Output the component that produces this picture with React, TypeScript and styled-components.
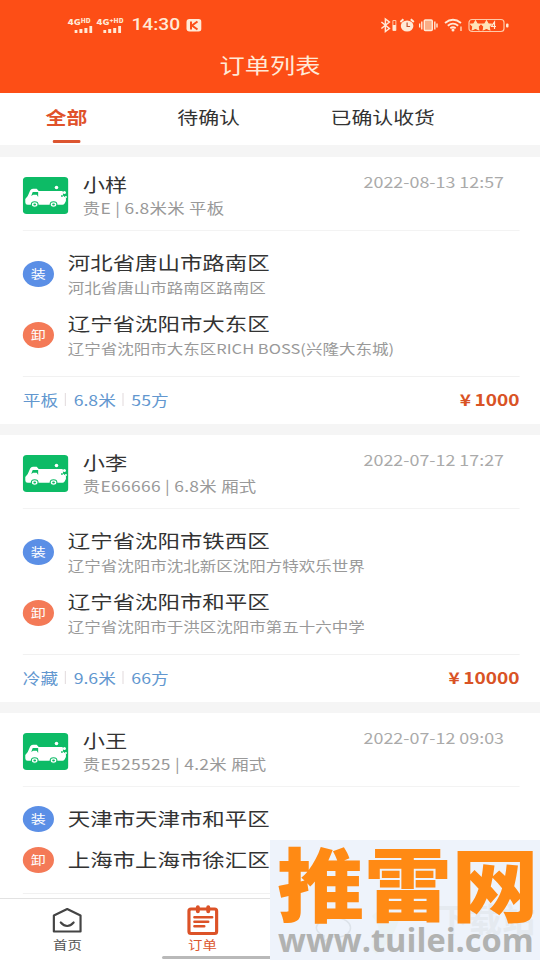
import React from 'react';
import styled, { createGlobalStyle } from 'styled-components';

const GlobalStyle = createGlobalStyle`
  * { box-sizing: border-box; }
  body { margin: 0; background: #fff; overflow: hidden; }
`;

const Page = styled.div`
  position: relative;
  width: 540px;
  height: 960px;
  overflow: hidden;
  font-family: 'Noto Sans CJK SC', sans-serif;
`;

/* The phone screen is 450 units wide and is stretched to fill the page. */
const Screen = styled.div`
  width: 450px;
  height: 960px;
  display: flex;
  flex-direction: column;
  background: #f5f5f5;
  color: #333;
  transform: scaleX(1.2);
  transform-origin: 0 0;
`;

const Header = styled.header`
  flex: none;
  height: 93px;
  background: #fd4e16;
  color: #ffe9d6;
`;

const StatusBar = styled.div`
  display: flex;
  align-items: center;
  height: 49px;
  padding: 0 25px 0 56.5px;
`;

const Network = styled.div`
  width: 24px;
  display: flex;
  flex-direction: column;
  align-items: flex-start;
  font: 900 8px/8px 'Noto Sans CJK SC', sans-serif;
  white-space: nowrap;
`;

const Sup = styled.span`
  font-size: 5.5px;
  vertical-align: 2px;
`;

const Bars = styled.svg`
  width: 15px;
  height: 7px;
  margin-left: 5px;
`;

const Clock = styled.span`
  margin-left: 5px;
  width: 45px;
  font: 500 16px/24px Roboto, sans-serif;
`;

const StatusIcon = styled.svg<{ $w: number; $ml?: number }>`
  flex: none;
  width: ${(p) => p.$w / 1.2}px;
  height: 16px;
  margin-left: ${(p) => (p.$ml ?? 0) / 1.2}px;
`;

const StatusRight = styled.div`
  margin-left: auto;
  display: flex;
  align-items: center;
`;

const Title = styled.h1`
  margin: 0;
  text-align: center;
  font-size: 21px;
  line-height: 30px;
  font-weight: 400;
`;

const Tabs = styled.nav`
  flex: none;
  display: flex;
  height: 52px;
  padding-left: 38px;
  background: #fff;
`;

const Tab = styled.div<{ $active?: boolean; $gap?: number }>`
  display: flex;
  flex-direction: column;
  align-items: center;
  margin-right: ${(p) => p.$gap ?? 0}px;
  padding-top: 12px;
  font-size: 17.4px;
  line-height: 24px;
  font-weight: ${(p) => (p.$active ? 700 : 400)};
  color: ${(p) => (p.$active ? '#e0522b' : '#333')};
  &::after {
    content: '';
    width: 23px;
    height: 3px;
    margin-top: 11px;
    border-radius: 1px;
    background: ${(p) => (p.$active ? '#dc5530' : 'transparent')};
  }
`;

const List = styled.main`
  flex: 1;
  min-height: 0;
  overflow: hidden;
  display: flex;
  flex-direction: column;
  gap: 11px;
  padding-top: 12px;
`;

const Card = styled.article`
  flex: none;
  padding: 0 17px 0 19px;
  background: #fff;
`;

const CardHead = styled.div`
  display: flex;
  height: 74px;
  padding-top: 15px;
  border-bottom: 1px solid #f3f3f3;
`;

const Truck = styled.svg`
  flex: none;
  width: 38px;
  height: 37px;
  margin: 5px 0.5px 0 -0.5px;
`;

const Driver = styled.div`
  flex: 1;
  margin-left: 12px;
  white-space: nowrap;
`;

const Name = styled.div`
  font-size: 18.5px;
  line-height: 24px;
`;

const Vehicle = styled.div`
  font-size: 14.5px;
  letter-spacing: 0.25px;
  line-height: 24px;
  color: #999;
`;

const DateText = styled.time`
  margin-right: 13px;
  font-size: 14.9px;
  line-height: 20px;
  color: #aaa;
`;

const Stops = styled.div<{ $brief: boolean }>`
  display: flex;
  flex-direction: column;
  gap: ${(p) => (p.$brief ? 13 : 11)}px;
  padding: 18px 0 ${(p) => (p.$brief ? 19 : 16)}px;
  border-bottom: 1px solid #f1f1f1;
`;

const Stop = styled.div`
  display: flex;
  align-items: center;
`;

const Badge = styled.span<{ $color: string }>`
  flex: none;
  width: 26px;
  height: 26px;
  margin: 0 11.7px 1px -0.2px;
  border-radius: 50%;
  background: ${(p) => p.$color};
  color: #fff;
  text-align: center;
  font-size: 12.5px;
  line-height: 26px;
`;

const StopText = styled.div`
  margin: -1px 0 1px;
  white-space: nowrap;
`;

const Place = styled.div`
  font-size: 18.7px;
  line-height: 28px;
`;

const Address = styled.div`
  font-size: 13.75px;
  line-height: 22px;
  color: #999;
`;

const CardFoot = styled.div`
  display: flex;
  align-items: center;
  justify-content: space-between;
  height: 47px;
  padding-bottom: 2px;
`;

const Tags = styled.div`
  display: flex;
  align-items: center;
`;

const Tag = styled.span`
  font-size: 14.7px;
  line-height: 20px;
  color: #6297cf;
  & + &::before {
    content: '';
    display: inline-block;
    width: 1px;
    height: 13px;
    margin: 0 6.5px 0 5.5px;
    background: #e6e0e2;
  }
`;

const Price = styled.strong`
  display: flex;
  align-items: center;
  gap: 3px;
  font-size: 15.9px;
  line-height: 20px;
  font-weight: 700;
  color: #d95325;
`;

const TabBar = styled.footer`
  flex: none;
  display: grid;
  grid-template-columns: repeat(4, 1fr);
  height: 62px;
  border-top: 1px solid #e2e2e2;
  background: #fff;
`;

const TabItem = styled.div<{ $active?: boolean }>`
  display: flex;
  flex-direction: column;
  align-items: center;
  padding-top: 6px;
  font-size: 12px;
  line-height: 16px;
  color: ${(p) => (p.$active ? '#dc5730' : '#555')};
`;

const TabIcon = styled.svg`
  width: 28px;
  height: 32px;
`;

const HomeIndicator = styled.div`
  position: absolute;
  left: 162px;
  top: 956px;
  width: 216px;
  height: 3px;
  border-radius: 2px;
  background: #b9b9b9;
`;

const Watermark = styled.div`
  position: absolute;
  left: 270px;
  top: 840px;
  width: 270px;
  height: 120px;
  background: #eef3fb;
`;

const WatermarkTitle = styled.div`
  position: relative;
  width: 240px;
  margin-left: 7px;
  height: 84px;
  font-size: 80px;
  line-height: 81px;
  font-weight: 900;
  color: #ff8a14;
  white-space: nowrap;
  transform: scaleX(1.09);
  transform-origin: 0 0;
`;

const WatermarkUrl = styled.div`
  position: relative;
  margin-left: 8px;
  font: 700 32.6px/31px 'Open Sans', sans-serif;
  color: #b1b2b1;
  white-space: nowrap;
`;

const Ghost = styled.div`
  position: absolute;
  left: 166px;
  top: 56px;
  font-size: 33px;
  line-height: 44px;
  font-weight: 700;
  color: #e5eaf0;
  white-space: nowrap;
`;

const GhostArt = styled.svg`
  position: absolute;
  left: 30px;
  top: 60px;
  width: 110px;
  height: 60px;
`;

const TruckIcon = () => (
  <Truck viewBox="0 0 46 37" preserveAspectRatio="none">
    <rect width="46" height="37" rx="4" fill="#0dbb66" />
    <path
      d="M2.5 25.5v-3.5l2.500-3 2.4-5.500q.8-1.700 2.800-1.700h3.800l2 2.200h23.500q1 0 1 1v3.500l3 2.500v3l-1.500 2.800q-.7 1-2 1H5q-2.500 0-2.500-2.500z"
      fill="#fff"
    />
    <path d="M8.500 19l1.500-4h5.500V20l-1.500-2.300h-3.500z" fill="#0dbb66" />
    <g fill="#fff">
      <circle cx="34" cy="10.500" r="1.800" />
      <circle cx="42" cy="15.500" r="1.500" />
      <circle cx="43.500" cy="20" r="1" />
      <ellipse cx="12" cy="27.500" rx="3.400" ry="2.800" stroke="#0dbb66" strokeWidth="1.100" />
      <ellipse cx="31" cy="27.500" rx="3.400" ry="2.800" stroke="#0dbb66" strokeWidth="1.100" />
    </g>
    <g fill="#0dbb66">
      <ellipse cx="12" cy="27.500" rx="1.400" ry="1" />
      <ellipse cx="31" cy="27.500" rx="1.400" ry="1" />
      <circle cx="39.500" cy="19" r=".9" />
    </g>
  </Truck>
);

const SignalBars = () => (
  <Bars viewBox="0 0 18 7" preserveAspectRatio="none" fill="currentColor">
    <rect x="0" y="4" width="3" height="3" />
    <rect x="5" y="3" width="3" height="4" />
    <rect x="10" y="2" width="3" height="5" />
    <rect x="15" y="0" width="3" height="7" />
  </Bars>
);

interface StopData {
  place: string;
  address?: string;
}

interface Order {
  name: string;
  vehicle: string;
  date: string;
  stops: [StopData, StopData];
  tags: string[];
  price?: string;
}

const orders: Order[] = [
  {
    name: '小样',
    vehicle: '贵E | 6.8米米 平板',
    date: '2022-08-13 12:57',
    stops: [
      { place: '河北省唐山市路南区', address: '河北省唐山市路南区路南区' },
      { place: '辽宁省沈阳市大东区', address: '辽宁省沈阳市大东区RICH BOSS(兴隆大东城)' },
    ],
    tags: ['平板', '6.8米', '55方'],
    price: '1000',
  },
  {
    name: '小李',
    vehicle: '贵E66666 | 6.8米 厢式',
    date: '2022-07-12 17:27',
    stops: [
      { place: '辽宁省沈阳市铁西区', address: '辽宁省沈阳市沈北新区沈阳方特欢乐世界' },
      { place: '辽宁省沈阳市和平区', address: '辽宁省沈阳市于洪区沈阳市第五十六中学' },
    ],
    tags: ['冷藏', '9.6米', '66方'],
    price: '10000',
  },
  {
    name: '小王',
    vehicle: '贵E525525 | 4.2米 厢式',
    date: '2022-07-12 09:03',
    stops: [{ place: '天津市天津市和平区' }, { place: '上海市上海市徐汇区' }],
    tags: [],
  },
];

const OrderCard = ({ order }: { order: Order }) => (
  <Card>
    <CardHead>
      <TruckIcon />
      <Driver>
        <Name>{order.name}</Name>
        <Vehicle>{order.vehicle}</Vehicle>
      </Driver>
      <DateText>{order.date}</DateText>
    </CardHead>
    <Stops $brief={!order.stops[0].address}>
      {order.stops.map((s, i) => (
        <Stop key={s.place}>
          <Badge $color={i === 0 ? '#5b8fe6' : '#f47a57'}>{i === 0 ? '装' : '卸'}</Badge>
          <StopText>
            <Place>{s.place}</Place>
            {s.address && <Address>{s.address}</Address>}
          </StopText>
        </Stop>
      ))}
    </Stops>
    <CardFoot>
      <Tags>
        {order.tags.map((t) => (
          <Tag key={t}>{t}</Tag>
        ))}
      </Tags>
      {order.price && (
        <Price>
          <span>¥</span>
          <span>{order.price}</span>
        </Price>
      )}
    </CardFoot>
  </Card>
);

const STAR = 'l1.700 2.900 3.300.5-2.300 2.300.6 3.400-3.300-1.500-3.300 1.500.6-3.400-2.300-2.300 3.300-.5z';

export default function App() {
  return (
    <Page>
      <GlobalStyle />
      <Screen>
        <Header>
          <StatusBar>
            <Network>
              <span>4G<Sup>HD</Sup></span>
              <SignalBars />
            </Network>
            <Network>
              <span>4G<Sup>+HD</Sup></span>
              <SignalBars />
            </Network>
            <Clock>14:30</Clock>
            <StatusIcon $w={16} viewBox="0 0 16 16" preserveAspectRatio="none">
              <rect x=".5" y="2" width="15" height="12.500" rx="3" fill="#ffe9d6" />
              <path d="M5 4.500v8M11.500 4.500L6 8.500l5.500 4" fill="none" stroke="#fd4e16" strokeWidth="2" />
            </StatusIcon>
            <StatusRight>
              <StatusIcon $w={17} viewBox="0 0 17 16" preserveAspectRatio="none">
                <path d="M1 5l8 6.500-4 3V2l4 3L1 11.500" fill="none" stroke="#ffe9d6" strokeWidth="1.500" />
                <path d="M12.500 3.500h3v10h-3z" fill="none" stroke="#ffc9a8" strokeWidth="1" />
                <path d="M12.500 8h3v5.500h-3z" fill="#ffe9d6" />
              </StatusIcon>
              <StatusIcon $w={15} $ml={3} viewBox="0 0 15 16" preserveAspectRatio="none">
                <ellipse cx="7.500" cy="9" rx="6.300" ry="5.500" fill="#ffe9d6" />
                <path d="M.8 5l3-2.700M14.200 5l-3-2.700" stroke="#ffe9d6" strokeWidth="2" />
                <path d="M7.500 5.500V9.500H10.500" fill="none" stroke="#c4522e" strokeWidth="1.200" />
              </StatusIcon>
              <StatusIcon $w={19} $ml={4} viewBox="0 0 19 16" preserveAspectRatio="none">
                <rect x="5.500" y="3" width="8" height="10.500" rx="1" fill="#f9ad86" stroke="#ffe9d6" strokeWidth="1.400" />
                <path d="M3 4.500v8M16 4.500v8M.8 6.500v4M18.200 6.500v4" stroke="#ffe9d6" strokeWidth="1.400" />
              </StatusIcon>
              <StatusIcon $w={20} $ml={6} viewBox="0 0 20 16" preserveAspectRatio="none">
                <path d="M1 6Q9 -.5 17 6M3.800 8.800Q9 4.500 14.200 8.800M6.300 11.300Q9 9.200 11.700 11.300" fill="none" stroke="#ffe9d6" strokeWidth="1.800" />
                <circle cx="9" cy="13" r="1.500" fill="#ffe9d6" />
                <path d="M17 9.500v4.500" stroke="#ffb089" strokeWidth="2" />
              </StatusIcon>
              <StatusIcon $w={42} $ml={4} viewBox="0 0 42 16" preserveAspectRatio="none">
                <rect x="1" y="2.500" width="35" height="12" rx="3" fill="none" stroke="#ffc9a8" strokeWidth="1.200" />
                <rect x="38" y="6.500" width="2.500" height="4" rx="1" fill="#ffe9d6" />
                <path d={`M7.500 3.800${STAR}`} fill="#ffe5b8" stroke="#ffe5b8" />
                <path d={`M18.500 3.800${STAR}`} fill="#ffe5b8" stroke="#ffe5b8" />
                <path d="M26.500 12V5L23.500 9.500h4.500" fill="none" stroke="#ffe9d6" strokeWidth="1.200" />
              </StatusIcon>
            </StatusRight>
          </StatusBar>
          <Title>订单列表</Title>
        </Header>
        <Tabs>
          <Tab $active $gap={75}>全部</Tab>
          <Tab $gap={75.5}>待确认</Tab>
          <Tab>已确认收货</Tab>
        </Tabs>
        <List>
          {orders.map((o) => (
            <OrderCard key={o.name} order={o} />
          ))}
        </List>
        <TabBar>
          <TabItem>
            <TabIcon viewBox="0 0 34 32" preserveAspectRatio="none">
              <path d="M3.500 10.500L17 4l13.500 6.500v16h-27z" fill="none" stroke="#444" strokeWidth="2.200" strokeLinejoin="round" />
              <path d="M10.500 17.500q6.500 7 13 0" fill="none" stroke="#444" strokeWidth="2.200" strokeLinecap="round" />
            </TabIcon>
            首页
          </TabItem>
          <TabItem $active>
            <TabIcon viewBox="0 0 34 32" preserveAspectRatio="none">
              <rect x="3" y="4" width="28" height="24.500" rx="2" fill="none" stroke="#dc5227" strokeWidth="3.200" />
              <path d="M12 2.300v4M22.500 2.300v4" stroke="#dc5227" strokeWidth="4" strokeLinecap="round" />
              <path d="M8.500 12.200h18M8.500 16.800h14M8.500 21.200h10" stroke="#dc5227" strokeWidth="2.500" strokeLinecap="round" />
            </TabIcon>
            订单
          </TabItem>
        </TabBar>
      </Screen>
      <HomeIndicator />
      <Watermark>
        <GhostArt viewBox="0 0 110 60">
          <path d="M36 18c18 0 20 18 2 19h-8l-6 5v-6c-14-6-8-18 12-18z" fill="none" stroke="#dde3ea" strokeWidth="1.500" />
          <path d="M72 16q10-12 28 0-6 24-24 38-8-8-2-16 10-8-2-22z" fill="#e9f1f4" />
        </GhostArt>
        <Ghost>下载站</Ghost>
        <WatermarkTitle>推雷网</WatermarkTitle>
        <WatermarkUrl>www.tuilei.com</WatermarkUrl>
      </Watermark>
    </Page>
  );
}
